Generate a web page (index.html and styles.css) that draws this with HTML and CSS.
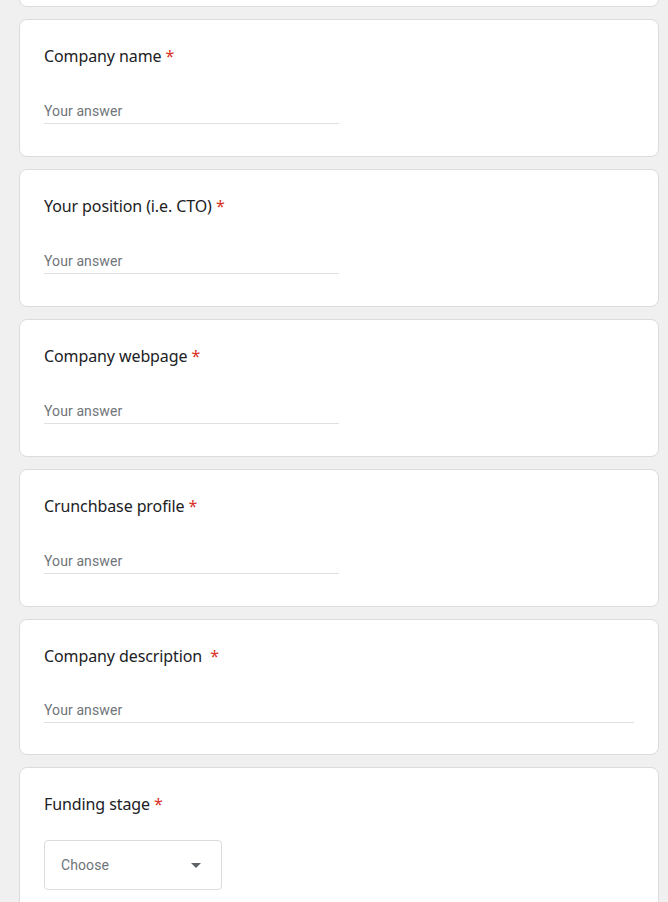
FILE: index.html
```html
<!DOCTYPE html>
<html>
<head>
<meta charset="utf-8">
<link rel="stylesheet" href="styles.css">
</head>
<body>
<div class="form">
  <div class="card card-top"></div>

  <div class="card">
    <div class="q-title">Company name <span class="req">*</span></div>
    <div class="answer short"><span class="ph">Your answer</span></div>
  </div>

  <div class="card">
    <div class="q-title">Your position (i.e. CTO) <span class="req">*</span></div>
    <div class="answer short"><span class="ph">Your answer</span></div>
  </div>

  <div class="card">
    <div class="q-title">Company webpage <span class="req">*</span></div>
    <div class="answer short"><span class="ph">Your answer</span></div>
  </div>

  <div class="card">
    <div class="q-title">Crunchbase profile <span class="req">*</span></div>
    <div class="answer short"><span class="ph">Your answer</span></div>
  </div>

  <div class="card card-desc">
    <div class="q-title">Company description &nbsp;<span class="req">*</span></div>
    <div class="answer long"><span class="ph">Your answer</span></div>
  </div>

  <div class="card card-select">
    <div class="q-title">Funding stage <span class="req">*</span></div>
    <div class="select">
      <span class="ph">Choose</span>
      <svg class="arrow" width="10" height="5" viewBox="0 0 10 5"><path d="M0 0 L10 0 L5 5 Z" fill="#5f6368"/></svg>
    </div>
  </div>
</div>
</body>
</html>
```

FILE: styles.css
```css
html, body {
  margin: 0;
  padding: 0;
  background: #f0f0f0;
  height: 100%;
  overflow: hidden;
}

.form {
  display: flex;
  flex-direction: column;
  gap: 12px;
  width: 640px;
  margin-left: 19px;
  margin-top: -40px;
}

.card {
  background: #fff;
  border: 1px solid #dadce0;
  border-radius: 8px;
  padding: 24px 24px 32px 24px;
  box-sizing: border-box;
}

.card-top {
  height: 47px;
  padding: 0;
}

.q-title {
  font-family: "Noto Sans", "Open Sans", sans-serif;
  font-size: 16px;
  line-height: 24px;
  color: #202124;
  letter-spacing: -0.1px;
}

.req {
  color: #d93025;
}

.answer {
  margin-top: 23px;
  height: 33px;
  padding-top: 8px;
  border-bottom: 1px solid #e0e0e0;
  display: flex;
  align-items: center;
  box-sizing: border-box;
}

.short {
  width: 295px;
}

.long {
  width: 100%;
}

.card-desc {
  padding-top: 24px;
  padding-bottom: 31px;
}

.card-desc .answer {
  margin-top: 22px;
}

.ph {
  font-family: Roboto, "Liberation Sans", sans-serif;
  font-size: 14px;
  color: #70757a;
  letter-spacing: 0.1px;
}

.card-select {
  padding-top: 24px;
  height: 200px;
}

.select {
  margin-top: 24px;
  width: 178px;
  height: 50px;
  box-sizing: border-box;
  border: 1px solid #dadce0;
  border-radius: 4px;
  display: flex;
  align-items: center;
  justify-content: space-between;
  padding: 0 20px 0 16px;
}

.arrow {
  display: block;
}
```
